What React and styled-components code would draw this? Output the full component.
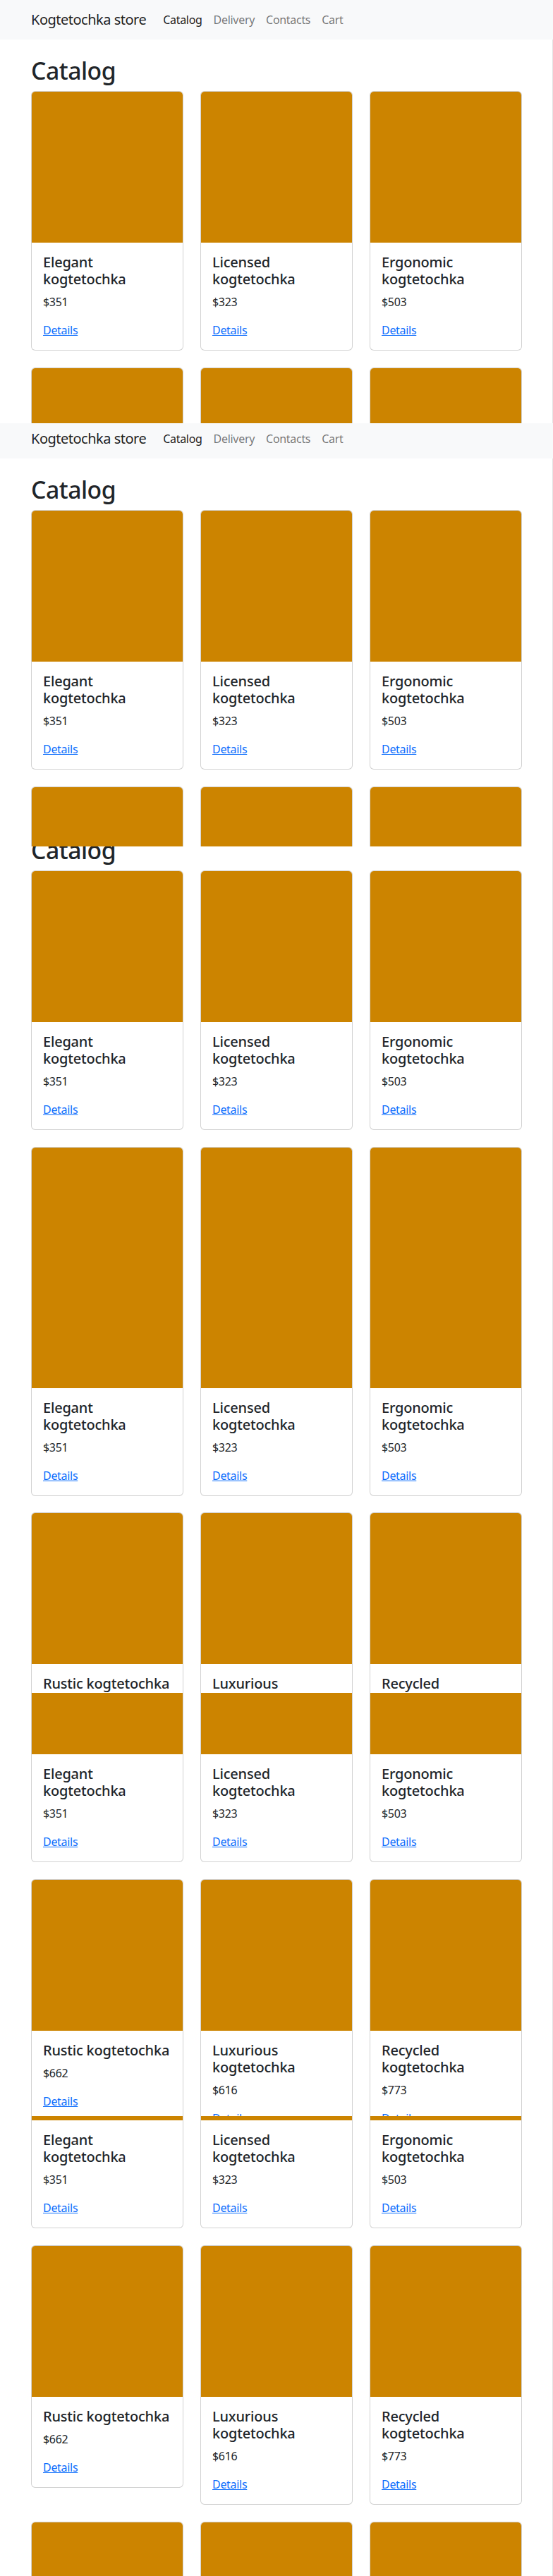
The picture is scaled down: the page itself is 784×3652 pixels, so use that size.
import React from 'react';
import styled, { createGlobalStyle } from 'styled-components';

const GlobalStyle = createGlobalStyle`
  html, body { margin: 0; padding: 0; background: #ffffff; }
  body {
    font-family: "Noto Sans", "Open Sans", sans-serif;
    color: #212529;
  }
  *, *::before, *::after { box-sizing: border-box; }
`;

const Shot = styled.div`
  width: 784px;
  display: flex;
  flex-direction: column;
`;

const Frame = styled.section`
  height: ${(p) => p.$height}px;
  overflow: hidden;
  flex: none;
`;

const Scroller = styled.div`
  margin-top: ${(p) => -p.$scroll}px;
`;

const Navbar = styled.nav`
  height: 56px;
  background: #f8f9fa;
  display: flex;
  align-items: center;
`;

const NavInner = styled.div`
  width: 696px;
  margin-left: 44px;
  display: flex;
  align-items: center;
`;

const Brand = styled.a`
  font-size: 20px;
  line-height: 30px;
  color: rgba(0, 0, 0, 0.9);
  text-decoration: none;
  margin-right: 16px;
  letter-spacing: -0.5px;
`;

const NavList = styled.div`
  display: flex;
  align-items: center;
`;

const NavLink = styled.a`
  font-size: 16px;
  line-height: 24px;
  padding: 8px;
  letter-spacing: -0.3px;
  text-decoration: none;
  color: ${(p) => (p.$active ? 'rgba(0, 0, 0, 0.9)' : 'rgba(0, 0, 0, 0.55)')};
`;

const Main = styled.main`
  padding: 24px 0 40px 44px;
  border-right: 1px solid #e3e3e3;
`;

const Heading = styled.h1`
  margin: 0 0 9px;
  font-size: 33.76px;
  line-height: 40px;
  font-weight: 500;
  letter-spacing: -0.5px;
  color: #212529;
`;

const Grid = styled.div`
  width: 696px;
  display: grid;
  grid-template-columns: repeat(3, 216px);
  column-gap: 24px;
  row-gap: 24px;
  align-items: start;
`;

const Card = styled.article`
  border: 1px solid rgba(0, 0, 0, 0.175);
  border-radius: 6px;
  background: #ffffff;
  overflow: hidden;
  display: flex;
  flex-direction: column;
`;

const CardImage = styled.div`
  height: ${(p) => p.$h}px;
  background: #cc8400;
`;

const CardBody = styled.div`
  padding: 16px;
`;

const Title = styled.h5`
  margin: 0 0 8px;
  font-size: 20px;
  line-height: 24px;
  font-weight: 500;
  letter-spacing: -0.2px;
  color: #212529;
`;

const Price = styled.p`
  margin: 0 0 16px;
  font-size: 16px;
  line-height: 24px;
  letter-spacing: -0.3px;
  color: #212529;
`;

const Details = styled.a`
  display: inline-block;
  font-size: 16px;
  line-height: 24px;
  letter-spacing: -0.3px;
  color: #0d6efd;
  text-decoration: underline;
`;

const products = [
  { name: 'Elegant kogtetochka', price: 351 },
  { name: 'Licensed kogtetochka', price: 323 },
  { name: 'Ergonomic kogtetochka', price: 503 },
  { name: 'Rustic kogtetochka', price: 662 },
  { name: 'Luxurious kogtetochka', price: 616 },
  { name: 'Recycled kogtetochka', price: 773 },
  { name: 'Handcrafted kogtetochka', price: 412 },
  { name: 'Sleek kogtetochka', price: 289 },
  { name: 'Gorgeous kogtetochka', price: 547 },
];

const links = [
  { label: 'Catalog', active: true },
  { label: 'Delivery' },
  { label: 'Contacts' },
  { label: 'Cart' },
];

function StorePage({ imgH }) {
  return (
    <>
      <Navbar>
        <NavInner>
          <Brand href="#">Kogtetochka store</Brand>
          <NavList>
            {links.map((l) => (
              <NavLink key={l.label} href="#" $active={l.active}>
                {l.label}
              </NavLink>
            ))}
          </NavList>
        </NavInner>
      </Navbar>
      <Main>
        <Heading>Catalog</Heading>
        <Grid>
          {products.map((p) => (
            <Card key={p.name}>
              <CardImage $h={imgH} />
              <CardBody>
                <Title>{p.name}</Title>
                <Price>${p.price}</Price>
                <Details href="#">Details</Details>
              </CardBody>
            </Card>
          ))}
        </Grid>
      </Main>
    </>
  );
}

const frames = [
  { height: 600, scroll: 0, imgH: 214 },
  { height: 600, scroll: 6, imgH: 214 },
  { height: 420, scroll: 95, imgH: 214 },
  { height: 512, scroll: 123, imgH: 341 },
  { height: 268, scroll: 509, imgH: 214 },
  { height: 600, scroll: 257, imgH: 214 },
  { height: 652, scroll: 338, imgH: 214 },
];

export default function App() {
  return (
    <>
      <GlobalStyle />
      <Shot>
        {frames.map((f, i) => (
          <Frame key={i} $height={f.height}>
            <Scroller $scroll={f.scroll}>
              <StorePage imgH={f.imgH} />
            </Scroller>
          </Frame>
        ))}
      </Shot>
    </>
  );
}
